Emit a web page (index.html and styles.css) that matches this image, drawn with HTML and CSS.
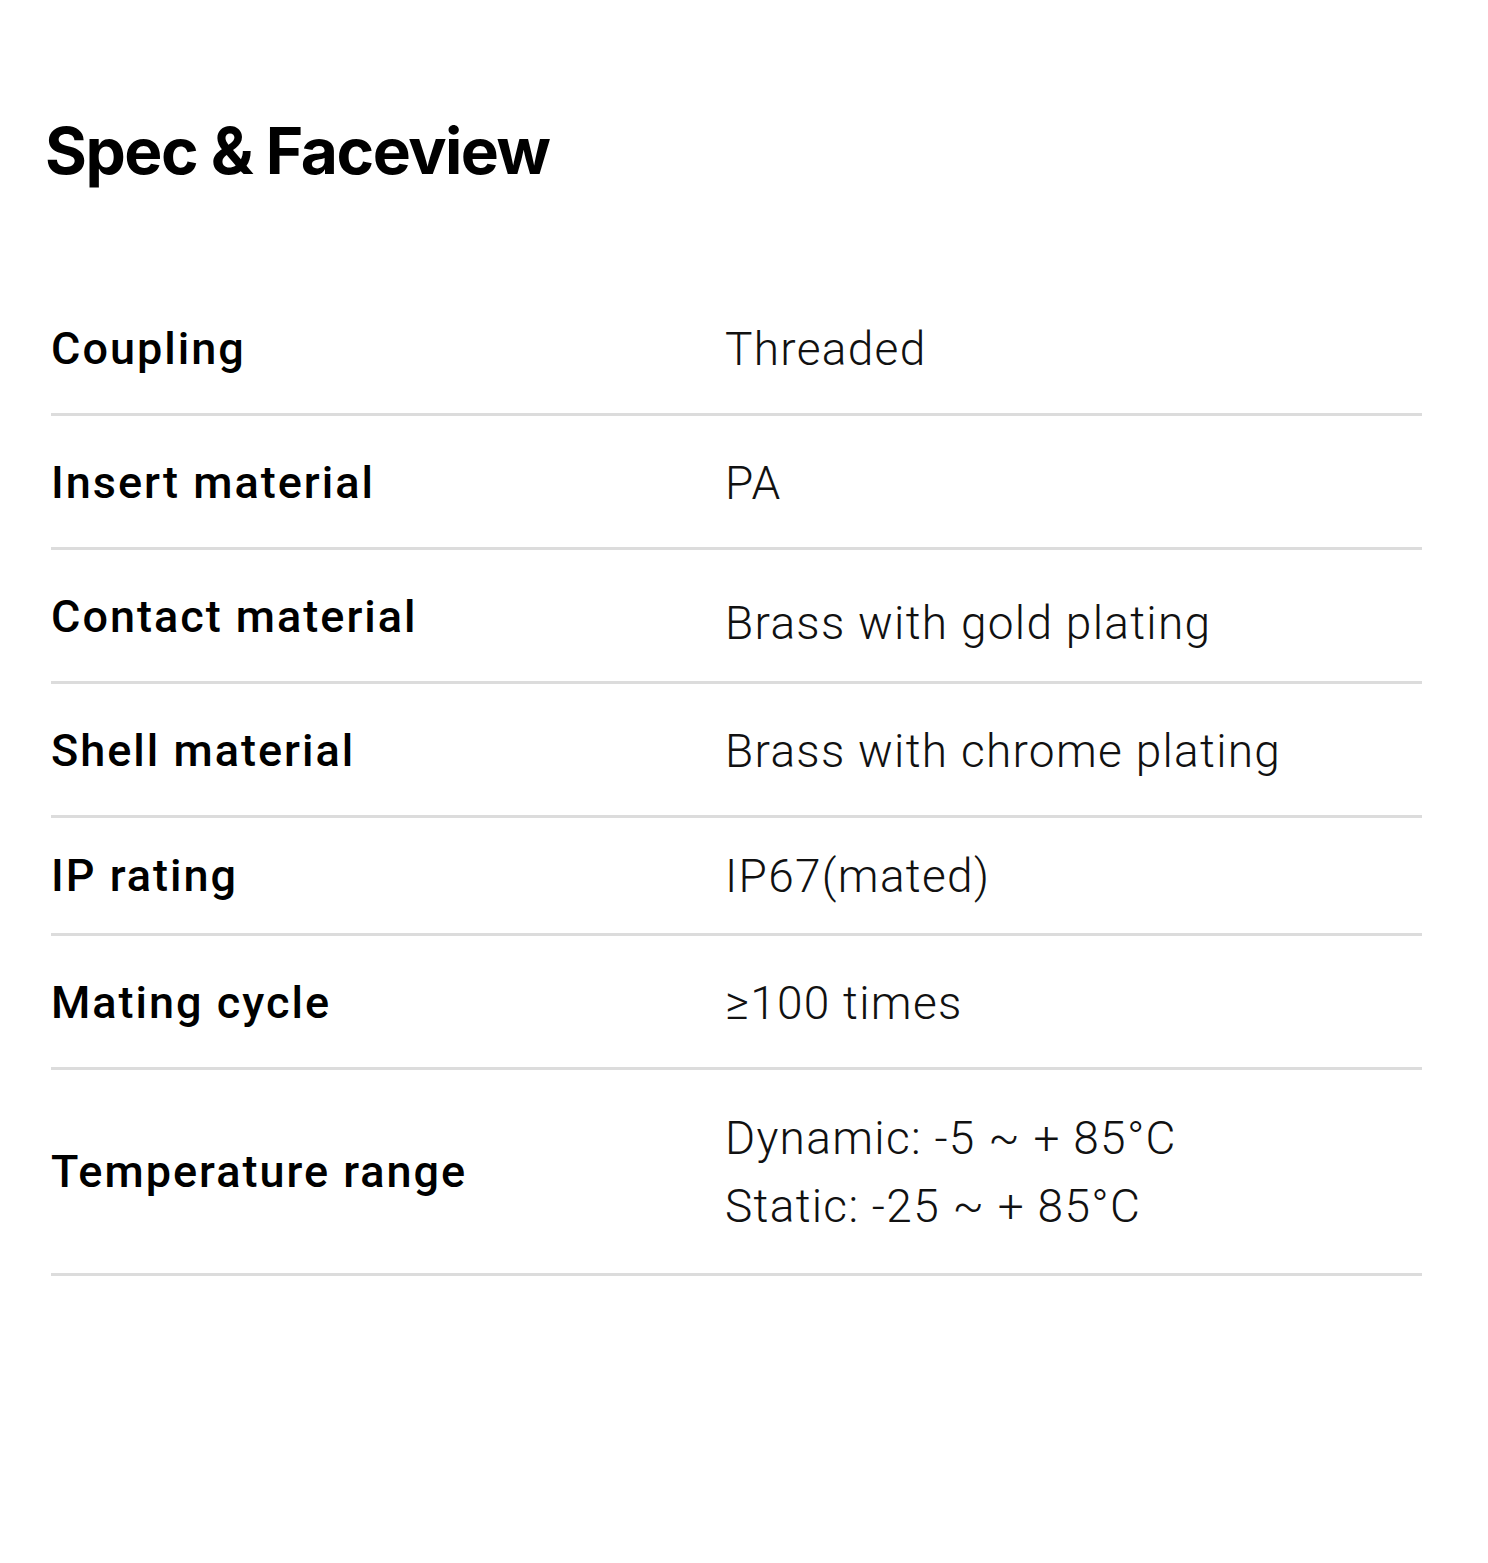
FILE: index.html
```html
<!DOCTYPE html>
<html lang="en">
<head>
<meta charset="utf-8">
<title>Spec &amp; Faceview</title>
<link rel="stylesheet" href="styles.css">
</head>
<body>
<section class="spec">
  <h2 class="spec-title">Spec &amp; Faceview</h2>
  <div class="spec-table">
    <div class="spec-row">
      <div class="spec-label">Coupling</div>
      <div class="spec-value">Threaded</div>
    </div>
    <div class="spec-row">
      <div class="spec-label">Insert material</div>
      <div class="spec-value">PA</div>
    </div>
    <div class="spec-row spec-row-low">
      <div class="spec-label">Contact material</div>
      <div class="spec-value spec-value-low">Brass with gold plating</div>
    </div>
    <div class="spec-row">
      <div class="spec-label">Shell material</div>
      <div class="spec-value">Brass with chrome plating</div>
    </div>
    <div class="spec-row spec-row-short">
      <div class="spec-label">IP rating</div>
      <div class="spec-value">IP67(mated)</div>
    </div>
    <div class="spec-row">
      <div class="spec-label">Mating cycle</div>
      <div class="spec-value">≥100 times</div>
    </div>
    <div class="spec-row spec-row-tall">
      <div class="spec-label">Temperature range</div>
      <div class="spec-value">Dynamic: -5 ~ + 85°C<br>Static: -25 ~ + 85°C</div>
    </div>
  </div>
</section>
</body>
</html>
```

FILE: styles.css
```css
html, body {
  margin: 0;
  padding: 0;
  background: #ffffff;
}

body {
  font-family: Roboto, "Liberation Sans", sans-serif;
  color: #000;
}

.spec {
  padding: 106px 66px 0 45px;
}

.spec-title {
  margin: 0;
  font-family: Inter, "Liberation Sans", sans-serif;
  font-weight: 700;
  font-size: 64px;
  line-height: 90px;
  letter-spacing: -1.5px;
  color: #000;
}

.spec-table {
  margin-top: 86px;
  margin-left: 6px;
}

.spec-row {
  display: grid;
  grid-template-columns: 674px 1fr;
  align-items: center;
  padding: 33px 0 30px;
  border-bottom: 3px solid #dcdcdc;
}

.spec-row-low {
  padding: 27px 0 24px;
}

.spec-row-short {
  padding: 24px 0 23px;
}

.spec-row-tall {
  padding: 34px 0 33px;
}

.spec-label {
  font-size: 45px;
  font-weight: 500;
  line-height: 68px;
  letter-spacing: 2px;
  color: #000;
}

.spec-value {
  font-size: 46px;
  font-weight: 300;
  line-height: 68px;
  letter-spacing: 1.3px;
  color: #111;
}

.spec-value-low {
  padding-top: 12px;
}
```
